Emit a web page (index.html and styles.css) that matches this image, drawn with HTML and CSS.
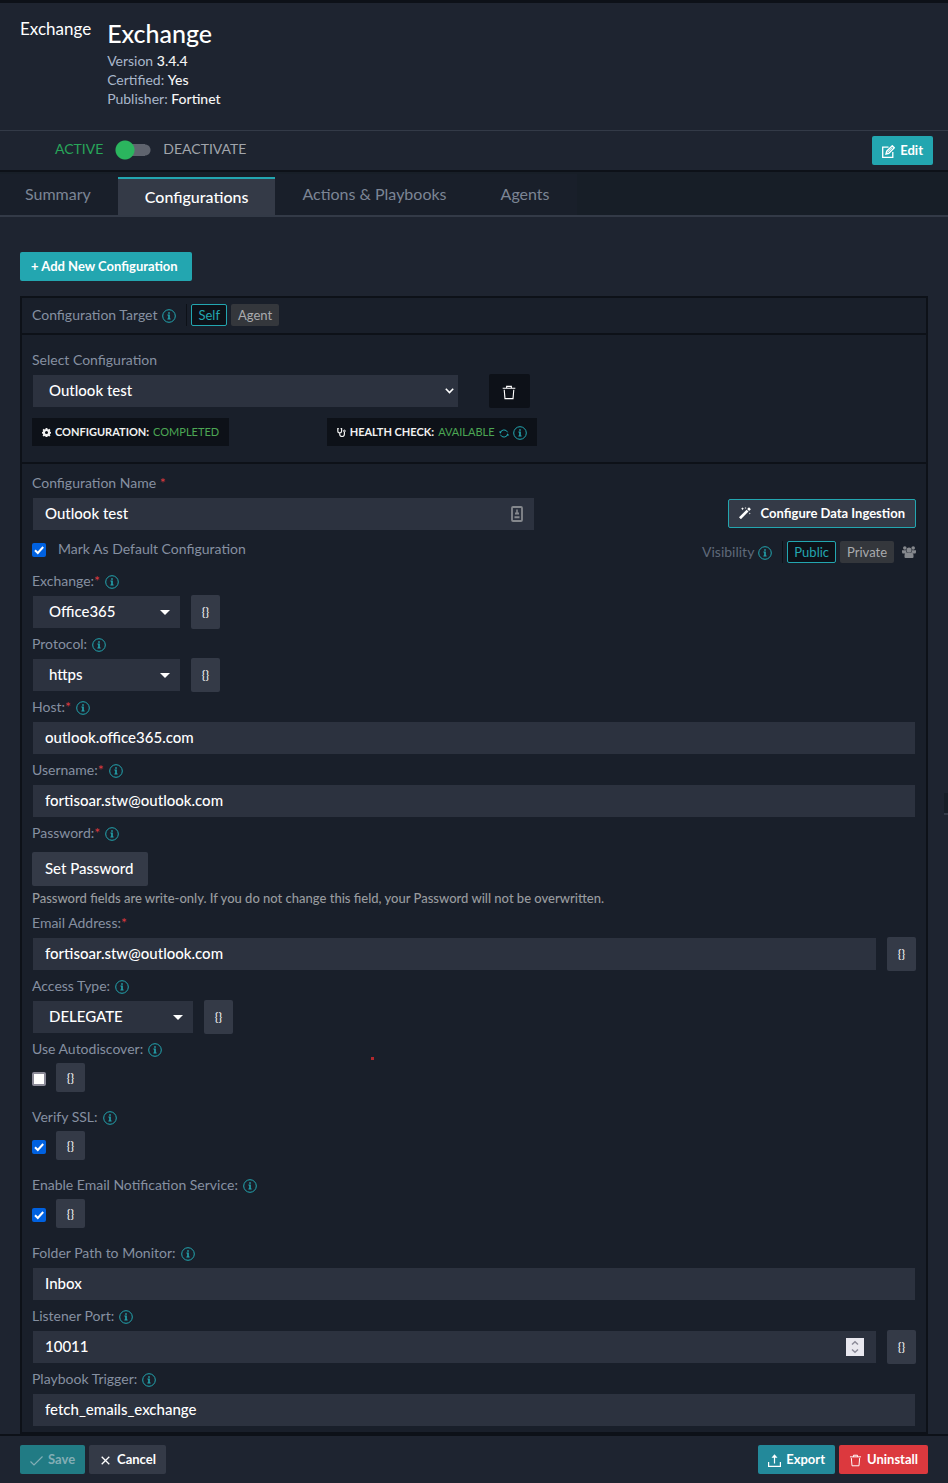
FILE: index.html
```html
<!DOCTYPE html>
<html lang="en">
<head>
<meta charset="utf-8">
<title>Exchange - Configurations</title>
<meta name="viewport" content="width=device-width, initial-scale=1">
<link rel="stylesheet" href="styles.css">
</head>
<body>
<svg class="sprite" aria-hidden="true">
  <symbol id="info" viewBox="0 0 14 14"><circle cx="7" cy="7" r="6.3" fill="none" stroke="currentColor"/><path d="M6.2 3.2h1.6v1.5H6.2zM5.4 5.6h2.4v4h.8v.9H5.4v-.9h.8V6.5h-.8z" fill="currentColor"/></symbol>
  <symbol id="trash" viewBox="0 0 14 16"><path d="M0 3.5h14M4.5 3.5v-2h5v2M1.9 5l.8 9.5h8.6L12.100 5" fill="none" stroke="currentColor" stroke-width="1.2"/></symbol>
  <symbol id="caret" viewBox="0 0 10 5"><path d="M0 0h10L5 5z" fill="currentColor"/></symbol>
</svg>

<header class="header">
  <div class="logo">Exchange</div>
  <div class="meta">
    <h1>Exchange</h1>
    <p>Version <b>3.4.4</b></p>
    <p>Certified: <b>Yes</b></p>
    <p>Publisher: <b>Fortinet</b></p>
  </div>
</header>

<div class="statusbar">
  <label class="toggle"><span class="on">ACTIVE</span><input type="checkbox" role="switch"><span>DEACTIVATE</span></label>
  <button class="btn teal" type="button"><svg class="i13" viewBox="0 0 13 13"><path d="M6.500 2.200H.7v10.100h10.100V7" fill="none" stroke="currentColor" stroke-width="1.300"/><path d="M4 9l.7-2.800L10.300.7l2 2L6.800 8.300z" fill="none" stroke="currentColor" stroke-width="1.300"/><path d="M5.200 7.600l5-5" stroke="currentColor"/></svg>Edit</button>
</div>

<nav class="tabs">
  <a href="#summary">Summary</a>
  <a href="#configurations" class="active" aria-current="page">Configurations</a>
  <a href="#actions">Actions &amp; Playbooks</a>
  <a href="#agents">Agents</a>
</nav>

<main class="main">
  <button class="btn teal add" type="button">+ Add New Configuration</button>

  <form class="panel" id="config">
    <div class="target">
      <span>Configuration Target</span><svg class="info"><use href="#info"/></svg>
      <span class="choices"><button class="chip on" type="button">Self</button><button class="chip" type="button">Agent</button></span>
    </div>

    <section class="chooser">
      <label class="lbl" for="cfg">Select Configuration</label>
      <div class="row wide">
        <span class="pick pick-lg"><select id="cfg" class="field"><option>Outlook test</option></select><svg class="chev" viewBox="0 0 9 6"><path d="M.800.800L4.500 4.500 8.200.800" fill="none" stroke="currentColor" stroke-width="1.600"/></svg></span>
        <button class="trash" type="button" aria-label="Delete configuration"><svg viewBox="0 0 14 16"><use href="#trash"/></svg></button>
      </div>
      <div class="badges">
        <div><span class="badge"><svg class="gear" viewBox="0 0 16 16"><path fill="currentColor" fill-rule="evenodd" d="M6.500 0h3l.4 2 1.300.600 1.800-1.100 2 2-1.100 1.800.6 1.300 1.500.300v2.800l-1.500.4-.6 1.300 1.100 1.800-2 2-1.800-1.100-1.300.6-.4 1.300h-3l-.4-1.300-1.300-.6L3 15.200l-2-2 1.100-1.800L1.500 10 0 9.700V6.900l1.500-.3.6-1.300L1 3.500l2-2 1.800 1.100L6.100 2zM8 5.300a2.700 2.700 0 100 5.400 2.700 2.700 0 000-5.400z"/></svg>CONFIGURATION: <em>COMPLETED</em></span></div>
        <div><span class="badge"><svg class="gear" viewBox="0 0 9 9"><path d="M1.800.700H.8v2.200a1.900 1.900 0 003.800 0V.700h-1M2.700 4.800v1.400a2.200 2.200 0 004.700 0V4" fill="none" stroke="currentColor" stroke-width="1.200"/><circle cx="7.400" cy="3" r=".9" fill="none" stroke="currentColor"/></svg>HEALTH CHECK: <em>AVAILABLE</em><svg class="sync" viewBox="0 0 10 9"><path d="M1.300 3.600A3.900 3.900 0 018.600 3.300M8.700 5.400a3.900 3.900 0 01-7.300.300" fill="none" stroke="currentColor"/><path d="M0 2.400h2.800L1.300 4.700zM10 6.600H7.200l1.500-2.300z" fill="currentColor"/></svg><svg class="info"><use href="#info"/></svg></span></div>
      </div>
    </section>

    <section class="fields">
      <div class="split">
        <div class="name">
          <label class="lbl" for="name">Configuration Name <i>&nbsp;*</i></label>
          <div class="row"><span class="pick grow"><input id="name" class="field" type="text" value="Outlook test"><svg class="card" viewBox="0 0 12 16"><rect x="1" y="1" width="10" height="14" rx="1" fill="none" stroke="currentColor" stroke-width="1.800"/><path d="M5.200 3.500h1.600v3.200H5.200zM4 6.500h4v2H4zM3.500 10.200h5v2h-5z" fill="currentColor"/></svg></span></div>
          <label class="default"><input class="check" type="checkbox" checked>Mark As Default Configuration</label>
        </div>
        <div class="aside">
          <button class="btn ingest" type="button"><svg viewBox="0 0 12 12"><path d="M0 10.300L7.600 2.700l1.900 1.900L1.900 12.200zM8.200 2.100L10 .300l1.900 1.900-1.800 1.800zM3.500.300l.5 1 1 .5-1 .5-.5 1-.5-1-1-.5 1-.5zM6.500 0l.3.700.7.300-.7.300-.3.700-.3-.7-.7-.3.700-.3zM10.800 5.500l.3.700.7.300-.7.300-.3.700-.3-.7-.7-.3.700-.3z" fill="currentColor"/></svg>Configure Data Ingestion</button>
          <div class="visibility"><span>Visibility</span><svg class="info"><use href="#info"/></svg>
            <span class="choices"><button class="chip on" type="button">Public</button><button class="chip" type="button">Private</button></span>
            <svg class="people" viewBox="0 0 14 12"><g fill="currentColor"><circle cx="2.800" cy="2" r="1.800"/><circle cx="11.200" cy="2" r="1.800"/><circle cx="7" cy="4" r="2.500"/><path d="M0 4.200h4.200L4.500 6.500 3 7.500H1Q0 7.500 0 6zM14 4.200H9.800L9.500 6.500 11 7.500h2q1 0 1-1.500zM2.500 9.500Q2.500 6.700 5 6.500h4q2.500.2 2.500 3V11q0 1-1 1h-7q-1 0-1-1z"/></g></svg>
          </div>
        </div>
      </div>

      <label class="lbl" for="exchange">Exchange:<i>*</i> <svg class="info"><use href="#info"/></svg></label>
      <div class="row"><span class="pick pick-sm"><select id="exchange" class="field"><option>Office365</option></select><svg class="caret"><use href="#caret"/></svg></span><button class="brace" type="button">{}</button></div>

      <label class="lbl" for="protocol">Protocol: <svg class="info"><use href="#info"/></svg></label>
      <div class="row"><span class="pick pick-sm"><select id="protocol" class="field"><option>https</option></select><svg class="caret"><use href="#caret"/></svg></span><button class="brace" type="button">{}</button></div>

      <label class="lbl" for="host">Host:<i>*</i> <svg class="info"><use href="#info"/></svg></label>
      <div class="row"><input id="host" class="field" type="text" value="outlook.office365.com"></div>

      <label class="lbl" for="user">Username:<i>*</i> <svg class="info"><use href="#info"/></svg></label>
      <div class="row"><input id="user" class="field" type="text" value="fortisoar.stw@outlook.com"></div>

      <label class="lbl" for="password">Password:<i>*</i> <svg class="info"><use href="#info"/></svg></label>
      <button class="setpw" id="password" type="button">Set Password</button>
      <p class="note">Password fields are write-only. If you do not change this field, your Password will not be overwritten.</p>

      <label class="lbl" for="email">Email Address:<i>*</i></label>
      <div class="row"><input id="email" class="field" type="text" value="fortisoar.stw@outlook.com"><button class="brace" type="button">{}</button></div>

      <label class="lbl" for="access">Access Type: <svg class="info"><use href="#info"/></svg></label>
      <div class="row"><span class="pick pick-md"><select id="access" class="field"><option>DELEGATE</option></select><svg class="caret"><use href="#caret"/></svg></span><button class="brace" type="button">{}</button></div>

      <div class="option">
        <label class="lbl" for="auto">Use Autodiscover: <svg class="info"><use href="#info"/></svg></label>
        <div class="row"><input id="auto" class="check" type="checkbox"><button class="brace small" type="button">{}</button></div>
        <span class="dot"></span>
      </div>
      <div class="option">
        <label class="lbl" for="ssl">Verify SSL: <svg class="info"><use href="#info"/></svg></label>
        <div class="row"><input id="ssl" class="check" type="checkbox" checked><button class="brace small" type="button">{}</button></div>
      </div>
      <div class="option">
        <label class="lbl" for="notify">Enable Email Notification Service: <svg class="info"><use href="#info"/></svg></label>
        <div class="row"><input id="notify" class="check" type="checkbox" checked><button class="brace small" type="button">{}</button></div>
      </div>

      <label class="lbl" for="folder">Folder Path to Monitor: <svg class="info"><use href="#info"/></svg></label>
      <div class="row"><input id="folder" class="field" type="text" value="Inbox"></div>

      <label class="lbl" for="port">Listener Port: <svg class="info"><use href="#info"/></svg></label>
      <div class="row"><span class="pick grow"><input id="port" class="field" type="number" value="10011"><svg class="spin" viewBox="0 0 18 18"><path fill="#e9e8ef" d="M0 0h18v18H0z"/><path d="M6 6.500l3-2.800 3 2.800M6 11.500l3 2.800 3-2.800" fill="none" stroke="#8b8a98" stroke-width="1.500"/></svg></span><button class="brace" type="button">{}</button></div>

      <label class="lbl" for="trigger">Playbook Trigger: <svg class="info"><use href="#info"/></svg></label>
      <div class="row"><input id="trigger" class="field" type="text" value="fetch_emails_exchange"></div>
    </section>
  </form>
  <span class="edge"></span>
</main>

<footer class="footer">
  <button class="btn save" type="submit" form="config" disabled><svg class="i13" viewBox="0 0 13 13"><path d="M.5 7.500l3.500 3.500L12.500 2.500" fill="none" stroke="currentColor" stroke-width="1.200"/></svg>Save</button>
  <button class="btn grey" type="button"><svg class="x" viewBox="0 0 9 9"><path d="M.7.7l7.600 7.600M8.300.7L.7 8.300" stroke="currentColor" stroke-width="1.300"/></svg>Cancel</button>
  <span class="grow"></span>
  <button class="btn export" type="button"><svg class="i13" viewBox="0 0 13 13"><path d="M.6 8v4.300h11.800V8M6.500 9.500V2" fill="none" stroke="currentColor" stroke-width="1.200"/><path d="M6.500.300l3 3.400h-6z" fill="currentColor"/></svg>Export</button>
  <button class="btn red" type="button"><svg class="i13" viewBox="0 0 14 16"><use href="#trash"/></svg>Uninstall</button>
</footer>
</body>
</html>
```
FILE: styles.css
```css
* { box-sizing: border-box; }
body {
  margin: 0;
  min-height: 100vh;
  display: flex;
  flex-direction: column;
  background: #1e2430;
  border-top: 3px solid #0d1118;
  color: #8690a1;
  font: 14px/20px Lato, "Liberation Sans", sans-serif;
}
button, input, select { font: inherit; color: inherit; margin: 0; }
button { border: 0; cursor: pointer; white-space: nowrap; }
p, h1 { margin: 0; }
svg { display: block; flex: none; }
.sprite { position: absolute; width: 0; height: 0; }
.grow { flex: 1; }

.header {
  display: flex;
  gap: 16px;
  height: 128px;
  padding: 16px 20px;
  border-bottom: 1px solid #333a47;
}
.logo { color: #fff; font-size: 17px; }
.meta { color: #a9b7cb; }
.meta h1 { color: #fff; font-size: 25px; line-height: 28px; font-weight: 500; margin-bottom: 4px; }
.meta p { line-height: 19px; }
.meta b { color: #f5f5f5; font-weight: 500; }

.statusbar {
  display: flex;
  align-items: center;
  justify-content: space-between;
  height: 41px;
  padding: 0 15px 0 55px;
  border-bottom: 2px solid #0d1118;
}
.toggle { display: flex; align-items: center; gap: 12px; padding-bottom: 3px; color: #a1a5ab; }
.toggle .on { color: #28a65a; }
.toggle input {
  appearance: none;
  width: 36px;
  height: 20px;
  margin-top: 2px;
  background:
    radial-gradient(circle at 10px 10px, #2bb55e 9px, transparent 10px),
    linear-gradient(#5f646e, #5f646e) 10px 4px / 20px 12px no-repeat,
    radial-gradient(circle at 30px 10px, #5f646e 5px, transparent 6px);
}

.btn {
  display: inline-flex;
  align-items: center;
  gap: 5px;
  height: 29px;
  padding: 0 10px 1px;
  border-radius: 2px;
  color: #fff;
  font-size: 13px;
  font-weight: 700;
}
.btn .i13 { width: 13px; height: 13px; margin-top: 2px; }
.add { padding: 0 14px 1px 11px; }
.teal { background: #23a6b0; }
.export { background: #23899a; }
.red { background: #dc393e; }
.grey { background: #343a47; }
.save { background: #217b84; color: #83aeb5; }
.btn .x { width: 9px; height: 9px; margin: 2px 2px 0; }

.tabs {
  display: flex;
  align-items: flex-end;
  height: 45px;
  background: #171e27;
  border-bottom: 2px solid #333a47;
}
.tabs a {
  padding: 8px 27px 11px;
  border-top: 2px solid transparent;
  background: #191f2a;
  color: #7c8595;
  font-size: 16px;
  text-decoration: none;
}
.tabs a:first-child { padding-left: 25px; }
.tabs .active { padding-bottom: 8px; background: #343a47; border-top-color: #23a6b0; color: #fff; font-weight: 500; }

.main { position: relative; flex: 1; padding: 35px 20px 0; }
.panel { margin-top: 15px; border: 2px solid #0d1118; background: #191f2a; }
.target {
  display: flex;
  align-items: center;
  height: 37px;
  padding: 0 10px 2px;
  border-bottom: 2px solid #0d1118;
}
.info { width: 14px; height: 14px; color: #23a6b0; }
.target .info { margin: 2px 0 0 5px; }
.choices { display: flex; gap: 4px; margin-left: 10px; padding-left: 4px; border-left: 1px solid #0d1118; }
.chip { height: 22px; padding: 0 7px; border-radius: 2px; background: #34373c; color: #a9abae; font-size: 13px; line-height: 20px; }
.chip.on { background: #0d1118; border: 1px solid #23a6b0; color: #23a6b0; padding: 0 6px; }

.lbl { display: flex; align-items: center; height: 29px; padding: 5px 0 4px; }
.lbl .info { margin: 2px 0 0 5px; }
.lbl i { color: #dc393e; font-style: normal; }
.row { display: flex; align-items: center; gap: 10px; }
.field {
  flex: 1;
  min-width: 0;
  width: 100%;
  height: 34px;
  padding: 0 12px 3px;
  border: 1px solid #191f2a;
  background: #2c323f;
  color: #fff;
  font-size: 15px;
  font-weight: 500;
  border-radius: 0;
  appearance: none;
}
select.field { padding-left: 16px; }
input[type=number] { -moz-appearance: textfield; }
input::-webkit-inner-spin-button { appearance: none; }
.pick { position: relative; display: flex; }
.pick svg { position: absolute; top: 0; bottom: 0; margin: auto; }
.pick-lg { flex: 0 1 427px; }
.pick-sm { width: 149px; }
.pick-md { width: 162px; }
.chev { width: 9px; height: 6px; right: 5px; color: #fff; }
.caret { width: 10px; height: 5px; right: 11px; color: #fff; }
.card { width: 12px; height: 16px; right: 12px; color: #85888d; }
.spin { width: 18px; height: 18px; right: 13px; }
.brace {
  width: 29px;
  height: 34px;
  padding: 0;
  border-radius: 2px;
  background: #343a47;
  color: #f1f1f1;
  font-size: 12px;
  font-weight: 500;
}
.brace.small { height: 29px; }

.chooser { padding: 10px 10px 16px; border-bottom: 2px solid #0d1118; }
.wide { gap: 30px; }
.trash { display: flex; align-items: center; justify-content: center; width: 41px; height: 34px; padding: 2px 1px 0 0; border-radius: 2px; background: #0d1118; color: #fff; }
.trash svg { width: 14px; height: 15px; }
.badges { display: grid; grid-template-columns: 1fr 2fr; margin-top: 10px; }
.badge { display: inline-flex; align-items: center; gap: 4px; height: 28px; padding: 0 10px; background: #0d1118; color: #f1f1f1; font-size: 11px; font-weight: 700; white-space: nowrap; }
.badge em { color: #4ca654; font-style: normal; font-weight: 400; }
.gear { width: 9px; height: 9px; }
.sync { width: 10px; height: 9px; margin-top: 2px; color: #23a6b0; }
.badge .info { margin-top: 2px; }

.fields { padding: 4px 10px 5px; }
.split { display: flex; justify-content: space-between; }
.name { flex: 0 1 503px; }
.default { display: flex; align-items: center; gap: 12px; height: 35px; }
.check {
  appearance: none;
  flex: none;
  width: 14px;
  height: 14px;
  border: 2px solid #8b8a98;
  border-radius: 2px;
  background: #fff;
}
.default .check { margin-top: 2px; }
.check:checked {
  border: 0;
  background: #0061e0 url("data:image/svg+xml,%3Csvg xmlns='http://www.w3.org/2000/svg' viewBox='0 0 14 14'%3E%3Cpath d='M3 7.200l2.800 2.800L11.200 4' fill='none' stroke='%23fff' stroke-width='2'/%3E%3C/svg%3E");
}
.aside { display: flex; flex-direction: column; align-items: flex-end; gap: 13px; padding-top: 31px; }
.ingest { border: 1px solid #23a6b0; background: #343a47; gap: 10px; }
.ingest svg { width: 12px; height: 12px; }
.visibility { display: flex; align-items: center; color: #5f6979; }
.visibility .info { margin: 1px 0 0 4px; }
.people { width: 14px; height: 12px; margin-left: 8px; color: #85888d; }
.setpw { display: block; height: 34px; margin-top: 5px; padding: 0 14px 2px 13px; border-radius: 2px; background: #343a47; color: #fff; font-size: 15px; font-weight: 500; }
.note { padding: 2px 0 0; color: #989b9f; font-size: 13px; font-weight: 500; }
.option { position: relative; padding-bottom: 10px; }
.option .check { margin-top: 2px; }
.dot { position: absolute; left: 339px; top: 23px; width: 3px; height: 3px; background: #b3282d; }
.edge { position: absolute; right: 0; top: 576px; width: 4px; height: 22px; background: #171e27; border-bottom: 2px solid #333a47; }

.footer {
  display: flex;
  align-items: center;
  gap: 4px;
  height: 50px;
  padding: 0 20px;
  border-top: 2px solid #0d1118;
  border-bottom: 1px solid #171e27;
}
```
